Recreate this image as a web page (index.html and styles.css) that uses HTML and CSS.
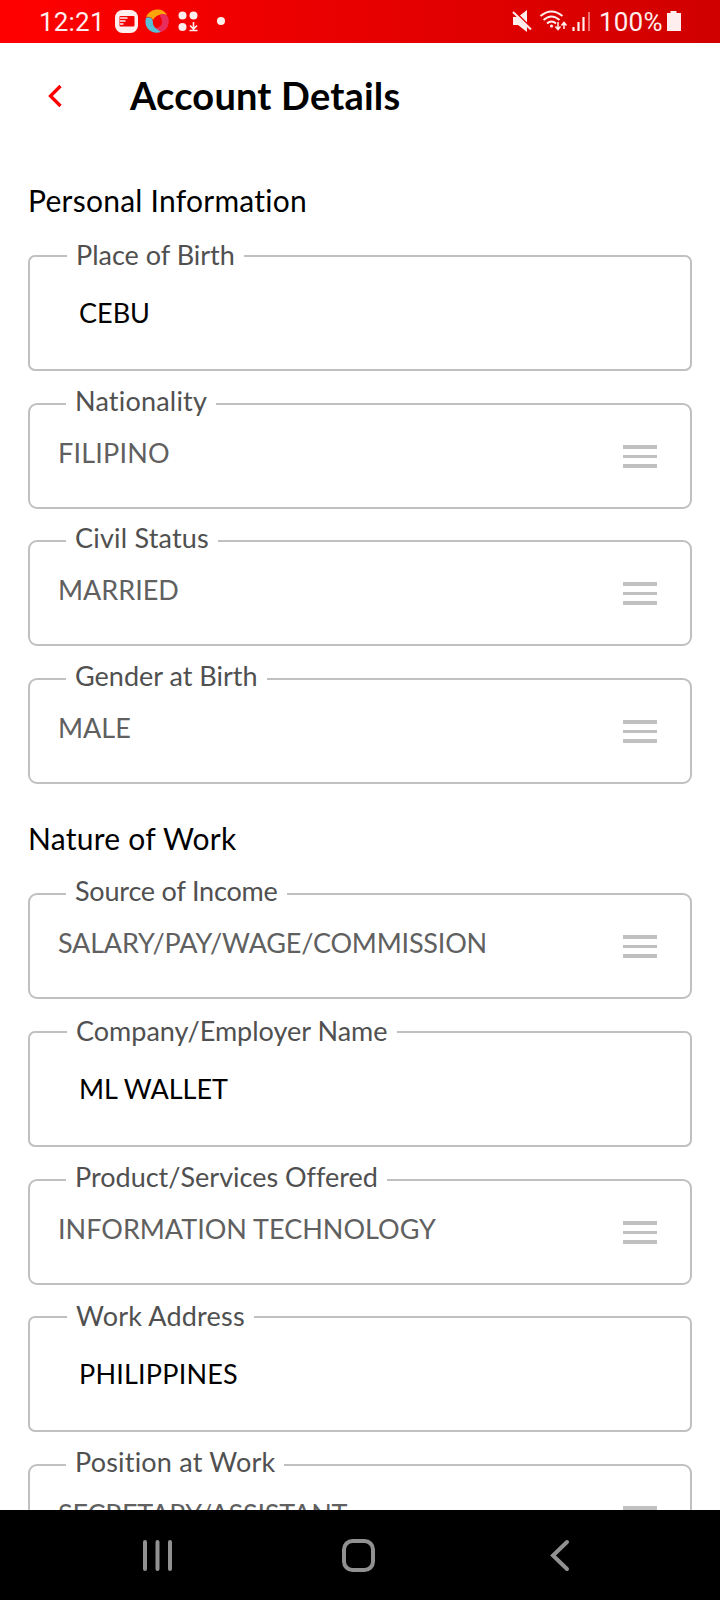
FILE: index.html
```html
<!DOCTYPE html>
<html lang="en">
<head>
<meta charset="utf-8">
<title>Account Details</title>
<link rel="stylesheet" href="styles.css">
</head>
<body>
<div class="screen">
  <div class="status">
    <span class="clock">12:21</span>
    <svg class="notif" width="120" height="42" viewBox="0 0 120 42">
      <rect x="5" y="10" width="23" height="23" rx="7.500" fill="#fee"/>
      <rect x="9.500" y="16" width="15" height="10.500" rx="1" fill="#f30000"/>
      <path d="M10 18h7.500M10 21h5.500M10 24h3.500" stroke="#fee" stroke-width="1.300"/>
      <path d="M36 17C40 8 53 7 57 15C51 13 46 15 43 20C42 17 39 16 36 17z" fill="#fba50a"/>
      <path d="M52 14C60 13 61 25 55 30C51 33 46 33 44 28C50 29 55 23 50 16C50 15 51 14 52 14z" fill="#e82d5d"/>
      <path d="M36 18C40 16 43 18 43 23C43 27 47 29 51 32C42 35 33 28 36 18z" fill="#58bfd6"/>
      <g fill="#fee"><circle cx="72.500" cy="15.500" r="4"/><circle cx="83.500" cy="15.500" r="4"/><circle cx="72.500" cy="27" r="4"/><circle cx="111" cy="21" r="4"/></g>
      <path d="M83.500 22v7M80 25.500l3.500 3.500 3.500-3.500M79.500 30.500h8" fill="none" stroke="#fee" stroke-width="1.600"/>
    </svg>
    <svg class="signals" width="84" height="42" viewBox="0 0 84 42">
      <path d="M3 17h5l9-7v22l-9-7H3z" fill="#fee"/>
      <path d="M2 9.500l20 20" stroke="#e00000" stroke-width="3"/>
      <path d="M3 12l18 17.500" stroke="#fee" stroke-width="2"/>
      <g fill="none" stroke="#fee" stroke-width="2"><path d="M30.500 16Q41.500 7 52.500 16M33.500 20Q41.500 13 49.500 20M37 23.500Q41.500 19.500 46 23.500"/></g>
      <circle cx="41.500" cy="26" r="1.600" fill="#fee"/>
      <path d="M48 22v7M45.500 26.500l2.500 3 2.500-3M54 29v-6M51.500 25.500l2.500-3 2.500 3" fill="none" stroke="#fee" stroke-width="1.500"/>
      <path d="M63.500 27v4M68.500 22v9M73.500 17v14" stroke="#fee" stroke-width="2.200"/><path d="M79 12v19" stroke="#f07070" stroke-width="2"/>
    </svg>
    <span class="percent">100%</span>
    <svg class="battery" width="16" height="42" viewBox="0 0 16 42"><path d="M4.500 11h6v2h4.500v18H1V13h3.500z" fill="#fee"/></svg>
  </div>
  <header class="header">
    <svg class="back" width="16" height="24" viewBox="0 0 16 24"><path d="M13.500 2L3.500 12l10 10" fill="none" stroke="red" stroke-width="3.300"/></svg>
    <h1 class="title">Account Details</h1>
  </header>
  <main class="form">
    <h2 class="section">Personal Information</h2>
    <div class="field input"><span class="label">Place of Birth</span><span class="value">CEBU</span></div>
    <div class="field select"><span class="label wide">Nationality</span><span class="value wide">FILIPINO</span><i class="menu"></i></div>
    <div class="field select tight"><span class="label wide">Civil Status</span><span class="value">MARRIED</span><i class="menu"></i></div>
    <div class="field select"><span class="label">Gender at Birth</span><span class="value">MALE</span><i class="menu"></i></div>
    <h2 class="section work">Nature of Work</h2>
    <div class="field select"><span class="label narrow">Source of Income</span><span class="value narrow">SALARY/PAY/WAGE/COMMISSION</span><i class="menu"></i></div>
    <div class="field input"><span class="label">Company/Employer Name</span><span class="value">ML WALLET</span></div>
    <div class="field select"><span class="label">Product/Services Offered</span><span class="value">INFORMATION TECHNOLOGY</span><i class="menu"></i></div>
    <div class="field input tight"><span class="label wide">Work Address</span><span class="value wide">PHILIPPINES</span></div>
    <div class="field select"><span class="label wide">Position at Work</span><span class="value narrow">SECRETARY/ASSISTANT</span><i class="menu"></i></div>
  </main>
  <nav class="nav">
    <svg width="720" height="90" viewBox="0 0 720 90" fill="none" stroke="#919191" stroke-width="4" stroke-linecap="round">
      <path d="M145 32v27M157.500 32v27M170 32v27"/>
      <rect x="344" y="31" width="29" height="29" rx="8.500"/>
      <path d="M567 32L553 45.500 567 59"/>
    </svg>
  </nav>
</div>
</body>
</html>
```
FILE: styles.css
```css
* { box-sizing: border-box; }
body { margin: 0; background: #fff; }
.screen { display: flex; flex-direction: column; width: 720px; height: 1600px; overflow: hidden; font-family: Lato, sans-serif; font-variant-ligatures: none; }
.status { display: flex; flex: none; height: 43px; padding-left: 39px; background: linear-gradient(90deg, #f00, #d00000); color: #fee; font: 26px/44px Roboto, sans-serif; }
.status svg { flex: none; }
.clock { width: 71px; letter-spacing: 0.2px; }
.signals { margin-left: 280px; }
.percent { width: 68px; margin-left: 5px; letter-spacing: 0.2px; white-space: nowrap; }
.battery { margin-left: -1px; }
.header { display: flex; flex: none; align-items: center; height: 107px; padding-left: 47px; }
.back { flex: none; margin-top: -1px; }
.title { margin: -4px 0 0 67px; font-size: 38px; line-height: 46px; letter-spacing: 0.18px; font-weight: 700; color: #000; }
.form { flex: 1; min-height: 0; padding: 32px 28px 0; overflow: hidden; }
.section { margin: 0 0 36px; font-size: 30px; line-height: 37px; letter-spacing: 0.25px; font-weight: 400; color: #000; }
.section.work { margin: 36px 0 36px; }
.field { position: relative; display: flex; width: 664px; margin-top: 32px; border: 2px solid #c0c0c0; font-size: 27px; line-height: 32px; }
.field.tight { margin-top: 31px; }
.section + .field { margin-top: 0; }
.input { height: 116px; padding: 40px 0 0 49px; border-radius: 7px; color: #000; }
.select { height: 106px; padding: 32px 33px 0 28px; border-radius: 9px; color: #606060; justify-content: space-between; }
.label { position: absolute; top: -20px; left: 36px; padding: 0 9px; background: #fff; color: #505050; white-space: nowrap; }
.input .label { top: -18px; left: 37px; }
.wide { letter-spacing: 0.2px; }
.narrow { letter-spacing: -0.2px; }
.menu { width: 34px; height: 24px; margin-top: 8px; background: linear-gradient(#c0c0c0 0 4px, #fff 4px 10px, #c0c0c0 10px 13px, #fff 13px 19px, #c0c0c0 19px 23px, #fff 23px); }
.nav { flex: none; height: 90px; background: #000; }
```
